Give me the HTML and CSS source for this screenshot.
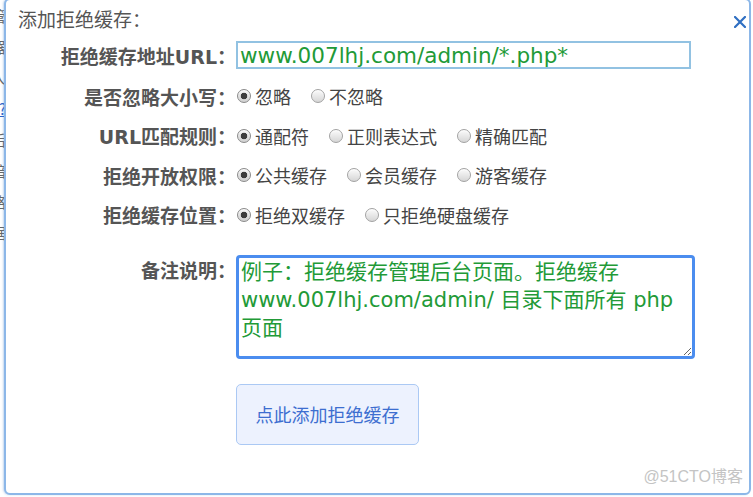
FILE: index.html
```html
<!DOCTYPE html>
<html lang="zh-CN">
<head>
<meta charset="utf-8">
<title>添加拒绝缓存</title>
<link rel="stylesheet" href="styles.css">
</head>
<body>
<div class="page-under">
  <div class="under-line">缓存管</div>
  <div class="under-line">管理器</div>
  <div class="under-line">设置人</div>
  <div class="under-line link">帮助?</div>
  <div class="under-line">后台后</div>
  <div class="under-line">管理暗</div>
  <div class="under-line">目录路</div>
  <div class="under-line">分类据</div>
</div>

<div class="modal">
  <div class="modal-head">
    <div class="modal-title">添加拒绝缓存：</div>
    <button class="modal-close" type="button" aria-label="关闭">
      <svg width="12" height="12" viewBox="0 0 12 12"><path d="M1 1 L11 11 M11 1 L1 11" stroke="#2f6fc2" stroke-width="2.2" stroke-linecap="square" fill="none"/></svg>
    </button>
  </div>

  <form class="form">
    <div class="row row-url">
      <label class="lbl">拒绝缓存地址URL：</label>
      <input class="url-input" type="text" value="www.007lhj.com/admin/*.php*">
    </div>

    <div class="row row-radio first-radio">
      <span class="lbl">是否忽略大小写：</span>
      <div class="opts">
        <label class="opt"><input type="radio" name="ic" checked>忽略</label>
        <label class="opt"><input type="radio" name="ic">不忽略</label>
      </div>
    </div>

    <div class="row row-radio">
      <span class="lbl">URL匹配规则：</span>
      <div class="opts">
        <label class="opt"><input type="radio" name="rule" checked>通配符</label>
        <label class="opt"><input type="radio" name="rule">正则表达式</label>
        <label class="opt"><input type="radio" name="rule">精确匹配</label>
      </div>
    </div>

    <div class="row row-radio">
      <span class="lbl">拒绝开放权限：</span>
      <div class="opts">
        <label class="opt"><input type="radio" name="perm" checked>公共缓存</label>
        <label class="opt"><input type="radio" name="perm">会员缓存</label>
        <label class="opt"><input type="radio" name="perm">游客缓存</label>
      </div>
    </div>

    <div class="row row-radio">
      <span class="lbl">拒绝缓存位置：</span>
      <div class="opts">
        <label class="opt"><input type="radio" name="pos" checked>拒绝双缓存</label>
        <label class="opt"><input type="radio" name="pos">只拒绝硬盘缓存</label>
      </div>
    </div>

    <div class="row row-note">
      <label class="lbl lbl-top">备注说明：</label>
      <textarea class="note">例子：拒绝缓存管理后台页面。拒绝缓存 www.007lhj.com/admin/ 目录下面所有 php 页面</textarea>
    </div>

    <div class="row row-btn">
      <span class="lbl"></span>
      <div><button class="submit" type="button">点此添加拒绝缓存</button></div>
    </div>
  </form>
</div>

<div class="watermark">@51CTO博客</div>
</body>
</html>
```

FILE: styles.css
```css
html, body {
  margin: 0;
  padding: 0;
}
body {
  width: 753px;
  height: 497px;
  overflow: hidden;
  position: relative;
  background: #fff;
  font-family: "DejaVu Sans", "Noto Sans CJK SC", sans-serif;
}

/* page beneath the dialog */
.page-under {
  width: 60px;
  margin-left: -54px;
  padding-top: 6px;
  text-align: right;
  font-family: "Noto Sans CJK SC", sans-serif;
  font-size: 15px;
  color: #666;
}
.under-line {
  height: 31px;
  line-height: 20px;
}
.under-line.link {
  color: #2a62c9;
  text-decoration: underline;
}

/* dialog */
.modal {
  position: absolute;
  left: 4px;
  top: -2px;
  width: 747px;
  height: 497px;
  box-sizing: border-box;
  border: 2px solid #8cb7e8;
  border-radius: 6px;
  background: #fff;
  box-shadow: -1px 0 2px rgba(90, 140, 210, 0.35);
}

.modal-head {
  display: flex;
  justify-content: space-between;
  align-items: flex-start;
  height: 36px;
  padding: 6px 3px 0 12px;
  box-sizing: border-box;
}
.modal-title {
  font-family: "Noto Sans CJK SC", sans-serif;
  font-size: 19px;
  line-height: 26px;
  color: #555;
}
.modal-close {
  border: 0;
  background: none;
  padding: 0;
  margin-top: 10px;
  width: 12px;
  height: 12px;
  display: flex;
  cursor: pointer;
}

.form {
  display: flex;
  flex-direction: column;
  padding-top: 5px;
}
.row {
  display: grid;
  grid-template-columns: 230px 1fr;
  align-items: center;
}
.lbl {
  text-align: right;
  font-family: "DejaVu Sans", "Noto Sans CJK SC", sans-serif;
  font-weight: bold;
  font-size: 19px;
  color: #555;
  white-space: nowrap;
}

.row-url {
  height: 28px;
}
.url-input {
  width: 455px;
  height: 28px;
  box-sizing: border-box;
  border: 2px solid #92c2e2;
  padding: 1px 2px 0;
  margin: 0;
  font-family: "DejaVu Sans", "Noto Sans CJK SC", sans-serif;
  font-size: 21.5px;
  color: #229a37;
  outline: none;
}

.row-radio {
  height: 30px;
  margin-top: 9.5px;
}
.row-radio.first-radio {
  margin-top: 12px;
}
.opts {
  display: flex;
  align-items: center;
}
.opt {
  display: inline-flex;
  align-items: center;
  gap: 4px;
  margin-right: 19px;
  font-family: "Noto Sans CJK SC", sans-serif;
  font-size: 18px;
  color: #444;
  white-space: nowrap;
}
.opt input {
  appearance: none;
  -webkit-appearance: none;
  width: 14px;
  height: 14px;
  margin: 0 0 0 1px;
  border: 1px solid #a2a2a2;
  border-radius: 50%;
  background: linear-gradient(#fbfbfb, #d6d6d6);
  box-shadow: inset 0 1px 1px rgba(255, 255, 255, 0.8);
  box-sizing: border-box;
}
.opt input:checked {
  border-color: #8a8a8a;
  background: radial-gradient(circle, #3d3d3d 0, #3d3d3d 3px, transparent 3.6px), linear-gradient(#f4f4f4, #d0d0d0);
}

.row-note {
  margin-top: 25px;
  align-items: start;
}
.lbl-top {
  line-height: 30px;
  padding-top: 1px;
}
.note {
  width: 459px;
  height: 104px;
  box-sizing: border-box;
  margin: 0;
  border: 3px solid #4b8def;
  border-radius: 4px;
  padding: 0 2px;
  font-family: "DejaVu Sans", "Noto Sans CJK SC", sans-serif;
  font-size: 21px;
  line-height: 28px;
  color: #229a37;
  outline: none;
  resize: both;
}

.row-btn {
  margin-top: 25px;
}
.submit {
  width: 183px;
  height: 61px;
  box-sizing: border-box;
  background: #edf2fe;
  border: 1px solid #abc9f4;
  border-radius: 5px;
  font-family: "Noto Sans CJK SC", sans-serif;
  font-size: 18px;
  color: #3d6ed0;
  padding: 0;
  cursor: pointer;
}

.watermark {
  position: absolute;
  right: 10px;
  bottom: 9px;
  font-family: "Liberation Sans", "Noto Sans CJK SC", sans-serif;
  font-size: 16px;
  line-height: 22px;
  color: #c4c4c4;
}
```
